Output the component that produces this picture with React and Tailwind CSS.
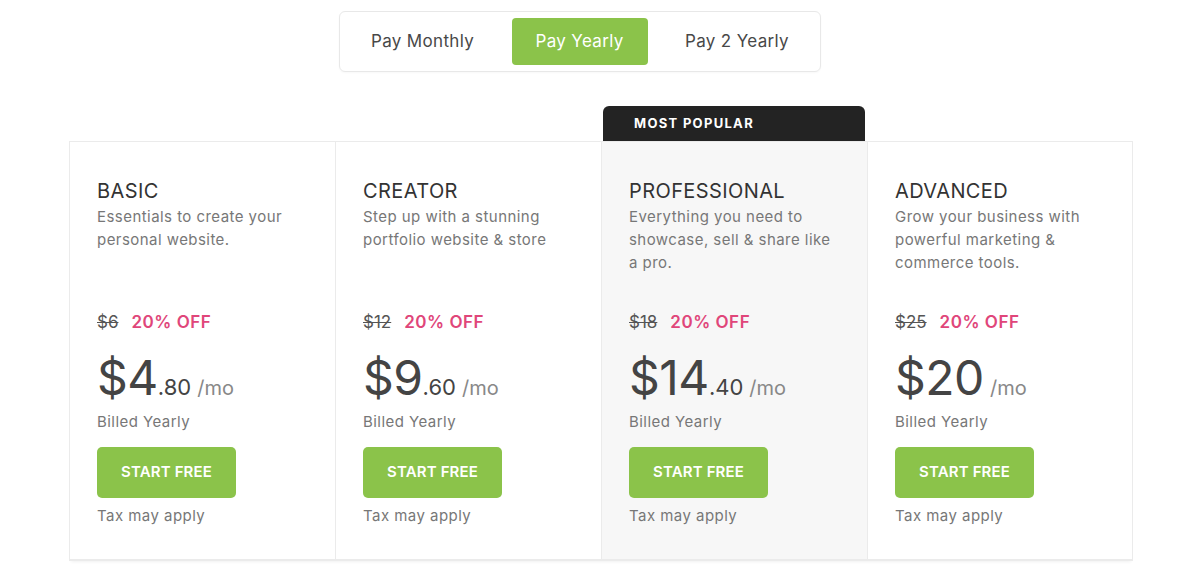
import React from 'react';

const PLANS = [
  { name: 'BASIC', desc: 'Essentials to create your personal website.', old: '$6', whole: '$4', cents: '.80' },
  { name: 'CREATOR', desc: 'Step up with a stunning portfolio website & store', old: '$12', whole: '$9', cents: '.60' },
  { name: 'PROFESSIONAL', desc: 'Everything you need to showcase, sell & share like a pro.', old: '$18', whole: '$14', cents: '.40', popular: true },
  { name: 'ADVANCED', desc: 'Grow your business with powerful marketing & commerce tools.', old: '$25', whole: '$20', cents: '' },
];

const TABS = ['Pay Monthly', 'Pay Yearly', 'Pay 2 Yearly'];

function PlanCard({ plan, last }) {
  return (
    <div className="flex flex-col">
      {/* badge row */}
      <div className="h-[35px] flex items-end">
        {plan.popular && (
          <div className="mx-[2px] w-full h-[35px] bg-[#232323] rounded-t-[6px] flex items-center pl-[31px] text-white text-[13px] font-bold tracking-[0.1em]">
            MOST POPULAR
          </div>
        )}
      </div>
      <div
        className={
          'flex-1 border-t border-b-2 border-l border-[#ebebeb] pt-[35px] pb-[32px] pl-[27px] pr-6 ' +
          (last ? 'border-r ' : '') +
          (plan.popular ? 'bg-[#f7f7f7]' : 'bg-white')
        }
      >
        <div className="text-[20px] leading-[28px] text-[#333] tracking-[0.02em]">{plan.name}</div>
        <div className="h-[105px] text-[15px] leading-[23px] text-[#777] tracking-[0.03em] pr-3">{plan.desc}</div>
        <div className="flex items-center gap-[13px] text-[17px] leading-[24px]">
          <span className="line-through text-[#555]">{plan.old}</span>
          <span className="font-semibold text-[#e0467a] tracking-[0.03em]">20% OFF</span>
        </div>
        <div className="mt-[20px] flex items-baseline text-[#444] leading-none h-[48px]">
          <span className="text-[48px] tracking-[-0.01em]">{plan.whole}</span>
          <span className="text-[22px]">{plan.cents}</span>
          <span className="ml-[6px] text-[20px] text-[#888]">/mo</span>
        </div>
        <div className="mt-[9px] text-[15px] leading-[22px] text-[#777] tracking-[0.03em]">Billed Yearly</div>
        <button className="mt-[14px] w-[139px] h-[51px] rounded-[5px] bg-[#8bc34a] text-white text-[15px] font-semibold tracking-[0.01em]">
          START FREE
        </button>
        <div className="mt-[7px] text-[15px] leading-[22px] text-[#777] tracking-[0.03em]">Tax may apply</div>
      </div>
    </div>
  );
}

export default function App() {
  return (
    <div className="min-h-screen bg-white font-['Inter',sans-serif] pt-[11px]">
      {/* billing toggle */}
      <div className="ml-[339px] w-[482px] h-[61px] border border-[#e8e8e8] rounded-[6px] flex items-center justify-between px-[7px] shadow-[0_1px_2px_rgba(0,0,0,0.03)]">
        {TABS.map((t) => (
          <div
            key={t}
            className={
              'h-[47px] px-6 flex items-center rounded-[4px] text-[17px] tracking-[0.02em] ' +
              (t === 'Pay Yearly' ? 'bg-[#8bc34a] text-white' : 'text-[#484848]')
            }
          >
            {t}
          </div>
        ))}
      </div>

      {/* plans */}
      <div className="mt-[34px] ml-[69px] w-[1064px] grid grid-cols-4 shadow-[0_3px_3px_-2px_rgba(0,0,0,0.06)]">
        {PLANS.map((p, i) => (
          <PlanCard key={p.name} plan={p} last={i === PLANS.length - 1} />
        ))}
      </div>
    </div>
  );
}
